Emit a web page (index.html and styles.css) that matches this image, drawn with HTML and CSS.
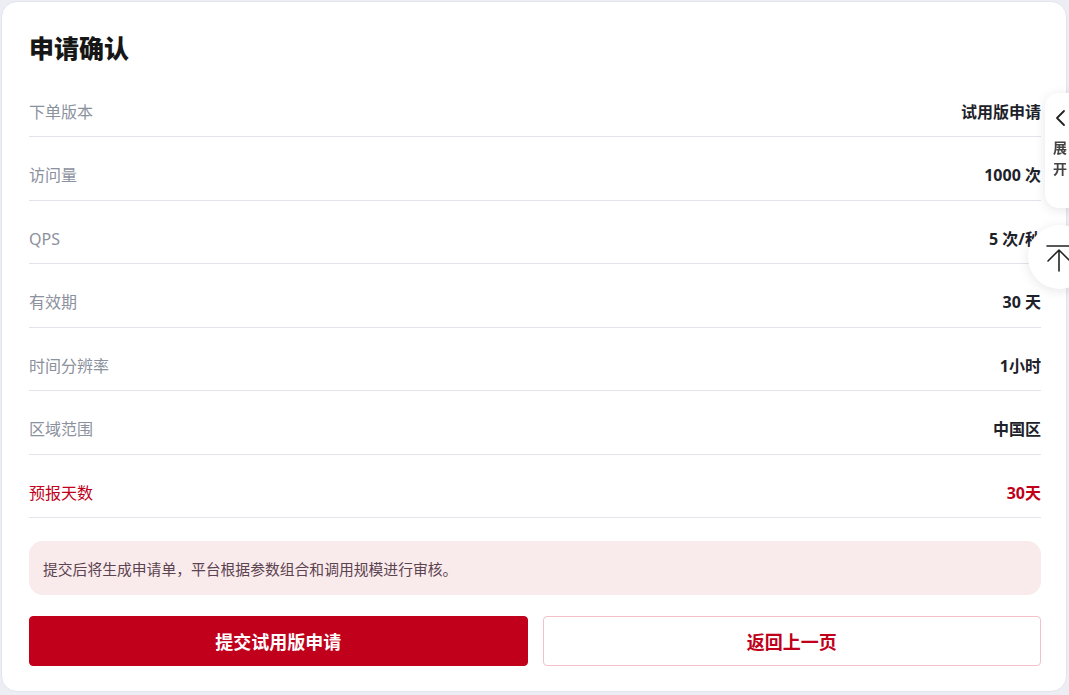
FILE: index.html
```html
<!DOCTYPE html>
<html lang="zh-CN">
<head>
<meta charset="utf-8">
<title>申请确认</title>
<link rel="stylesheet" href="styles.css">
</head>
<body>
<main class="card">
  <h1 class="title">申请确认</h1>
  <dl class="rows">
    <div class="row"><dt>下单版本</dt><dd>试用版申请</dd></div>
    <div class="row"><dt>访问量</dt><dd>1000 次</dd></div>
    <div class="row"><dt>QPS</dt><dd>5 次/秒</dd></div>
    <div class="row"><dt>有效期</dt><dd>30 天</dd></div>
    <div class="row"><dt>时间分辨率</dt><dd>1小时</dd></div>
    <div class="row"><dt>区域范围</dt><dd>中国区</dd></div>
    <div class="row row-accent"><dt>预报天数</dt><dd>30天</dd></div>
  </dl>
  <p class="notice">提交后将生成申请单，平台根据参数组合和调用规模进行审核。</p>
  <div class="actions">
    <button class="btn btn-primary" type="button">提交试用版申请</button>
    <button class="btn btn-secondary" type="button">返回上一页</button>
  </div>
</main>

<aside class="side-tab">
  <svg class="chev" width="14" height="18" viewBox="0 0 14 18"><path d="M10 2 L3 9 L10 16" fill="none" stroke="#222" stroke-width="1.8" stroke-linecap="round" stroke-linejoin="round"/></svg>
  <span class="side-text">展<br>开</span>
</aside>
<div class="to-top">
  <svg width="26" height="28" viewBox="0 0 26 28"><path d="M1 2 H25 M13 6 V27 M2 17 L13 6 L24 17" fill="none" stroke="#222" stroke-width="1.6" stroke-linecap="round" stroke-linejoin="round"/></svg>
</div>
</body>
</html>
```

FILE: styles.css
```css
* { box-sizing: border-box; }
html, body { margin: 0; padding: 0; }
body {
  background: #eceef4;
  font-family: "Noto Sans", "Noto Sans CJK SC", sans-serif;
  color: #1d2129;
  overflow: hidden;
  height: 695px;
}
.card {
  margin: 1px 2px 0 1px;
  background: #fff;
  border: 1px solid #e2e5ee;
  border-radius: 16px;
  padding: 31px 25px 25px 27px;
}
.title {
  margin: 0 0 10.5px;
  font-size: 25px;
  line-height: 30px;
  font-weight: 800;
  color: #161616;
}
.rows { margin: 0; }
.row {
  display: flex;
  justify-content: space-between;
  align-items: center;
  height: 63.5px;
  padding-top: 14px;
  border-bottom: 1px solid #e3e4ea;
  font-size: 16px;
  line-height: 22px;
}
.row dt { color: #8b919d; }
.row dd { margin: 0; font-weight: 700; color: #1d2129; }
.row-accent dt { color: #c0001a; }
.row-accent dd { color: #c0001a; }
.notice {
  margin: 23px 0 0;
  height: 54px;
  display: flex;
  align-items: center;
  padding: 0 14px;
  background: #f9eaeb;
  border-radius: 14px;
  font-size: 14.8px;
  color: #5b4350;
}
.actions {
  margin-top: 21px;
  display: grid;
  grid-template-columns: 1fr 1fr;
  gap: 15px;
}
.btn {
  height: 50px;
  border-radius: 4px;
  font-family: inherit;
  font-size: 18px;
  font-weight: 700;
  cursor: pointer;
}
.btn-primary {
  background: #c1001b;
  color: #fff;
  border: 1px solid #c1001b;
}
.btn-secondary {
  background: #fff;
  color: #c0001a;
  border: 1px solid #f5c0c9;
}
.side-tab {
  position: fixed;
  left: 1045px;
  top: 93px;
  width: 40px;
  height: 115px;
  background: #fff;
  border-radius: 14px 0 0 14px;
  box-shadow: 0 2px 12px rgba(0,0,0,0.10);
  padding: 16px 0 0 8px;
}
.chev { display: block; margin-left: 1px; }
.side-text {
  display: block;
  margin-top: 10px;
  font-size: 14px;
  line-height: 21px;
  font-weight: 600;
  color: #444;
}
.to-top {
  position: fixed;
  left: 1028px;
  top: 225px;
  width: 64px;
  height: 64px;
  border-radius: 50%;
  background: #fff;
  box-shadow: 0 2px 12px rgba(0,0,0,0.10);
  display: flex;
  align-items: center;
  padding-left: 18px;
}
.to-top svg { display: block; margin-top: 2px; }
```
